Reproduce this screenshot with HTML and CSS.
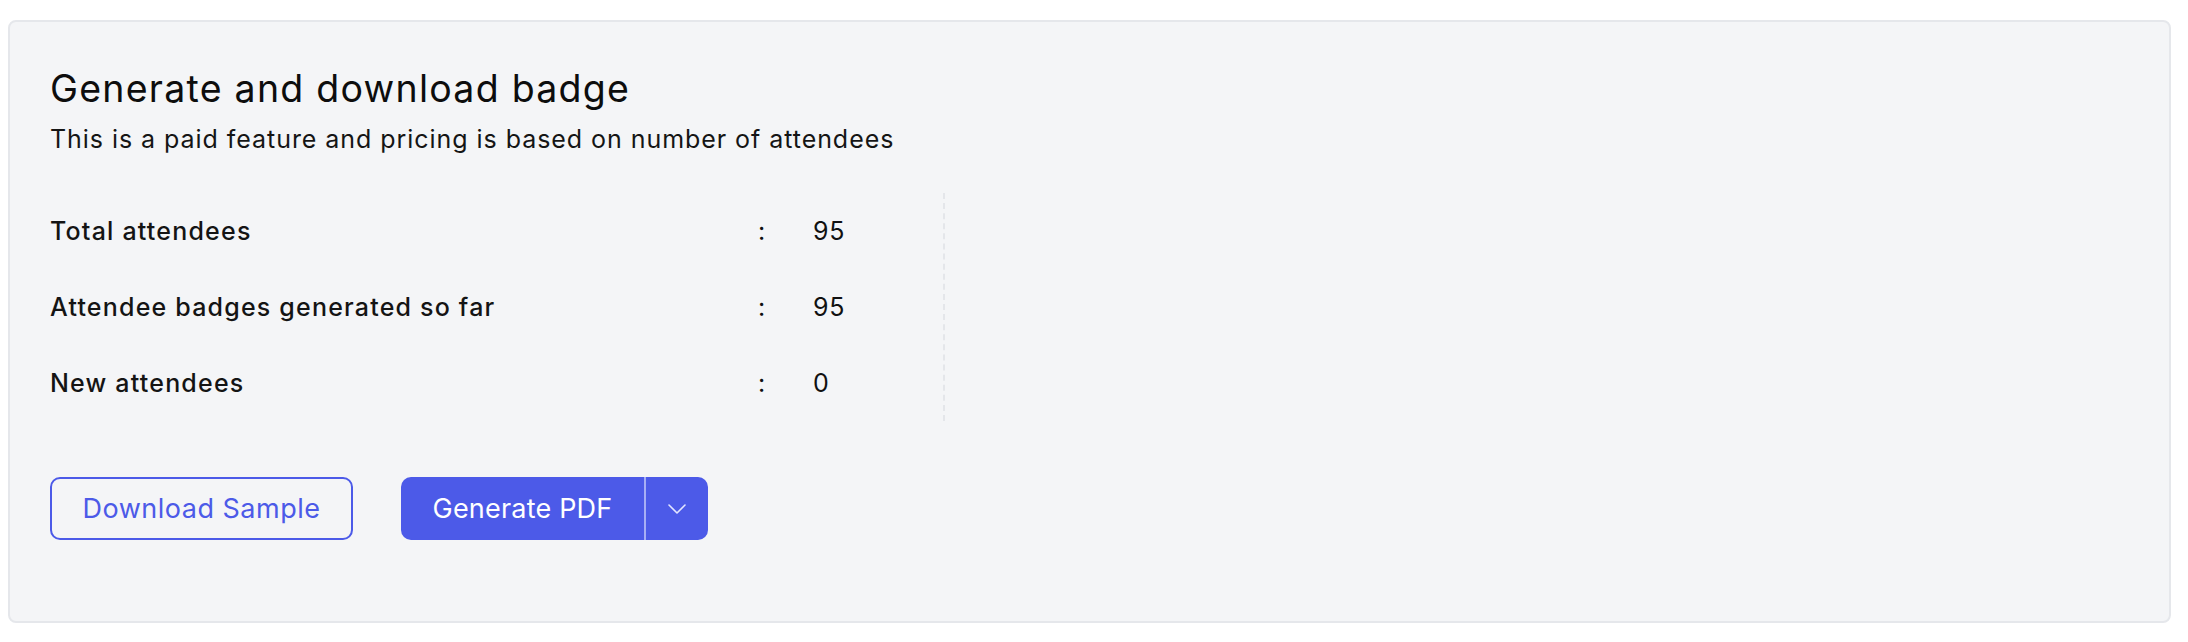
FILE: index.html
```html
<!DOCTYPE html>
<html lang="en">
<head>
<meta charset="utf-8">
<title>Generate and download badge</title>
<link rel="stylesheet" href="styles.css">
</head>
<body>
<div class="page">
  <section class="card">
    <h1 class="title">Generate and download badge</h1>
    <p class="subtitle">This is a paid feature and pricing is based on number of attendees</p>
    <div class="stats">
      <div class="label">Total attendees</div><div class="colon">:</div><div class="value">95</div>
      <div class="label">Attendee badges generated so far</div><div class="colon">:</div><div class="value">95</div>
      <div class="label">New attendees</div><div class="colon">:</div><div class="value">0</div>
    </div>
    <div class="actions">
      <button class="btn btn-outline" type="button">Download Sample</button>
      <div class="split">
        <button class="btn btn-primary" type="button">Generate PDF</button>
        <button class="btn btn-caret" type="button" aria-label="More options">
          <svg width="18" height="10" viewBox="0 0 18 10" fill="none"><path d="M1 1l8 8 8-8" stroke="#e3e6ff" stroke-width="1.6" stroke-linecap="round" stroke-linejoin="round"/></svg>
        </button>
      </div>
    </div>
  </section>
</div>
</body>
</html>
```

FILE: styles.css
```css
* { box-sizing: border-box; }
html, body { margin: 0; padding: 0; background: #ffffff; }
body { font-family: Inter, "Noto Sans", sans-serif; color: #111111; }
.page { padding: 20px 17px 19px 8px; }
.card {
  height: 603px;
  background: #f4f5f7;
  border: 2px solid #e5e7eb;
  border-radius: 8px;
  padding: 44px 40px 0 40px;
}
.title {
  margin: 0;
  font-size: 37.5px;
  line-height: 46px;
  font-weight: 400;
  color: #0d0d0d;
  letter-spacing: 1.25px;
}
.subtitle {
  margin: 10px 0 0 0;
  font-size: 25px;
  line-height: 34px;
  color: #151515;
  letter-spacing: 0.95px;
}
.stats {
  margin-top: 37px;
  display: grid;
  grid-template-columns: 708px 55px 132px;
  grid-auto-rows: 76px;
  width: 895px;
  border-right: 2px dashed #e4e6ea;
  align-items: center;
}
.label { font-size: 25px; font-weight: 500; line-height: 34px; letter-spacing: 1.2px; color: #141414; }
.colon, .value { font-size: 25px; line-height: 34px; letter-spacing: 0.8px; }
.actions {
  margin-top: 56px;
  display: flex;
  gap: 48px;
  align-items: stretch;
}
.btn {
  font-family: Inter, "Noto Sans", sans-serif;
  font-size: 27px;
  height: 63px;
  border-radius: 10px;
  cursor: pointer;
  display: flex;
  align-items: center;
  justify-content: center;
}
.btn-outline {
  width: 303px;
  background: transparent;
  border: 2px solid #4c5ae8;
  color: #4c5ae8;
  letter-spacing: 0.5px;
}
.split { display: flex; }
.btn-primary {
  width: 245px;
  background: #4c5ae8;
  color: #ffffff;
  border: none;
  border-radius: 10px 0 0 10px;
  border-right: 2px solid #a7aef5;
  letter-spacing: 0.2px;
}
.btn-caret {
  width: 62px;
  background: #4c5ae8;
  border: none;
  border-radius: 0 10px 10px 0;
  padding: 0;
}
```
